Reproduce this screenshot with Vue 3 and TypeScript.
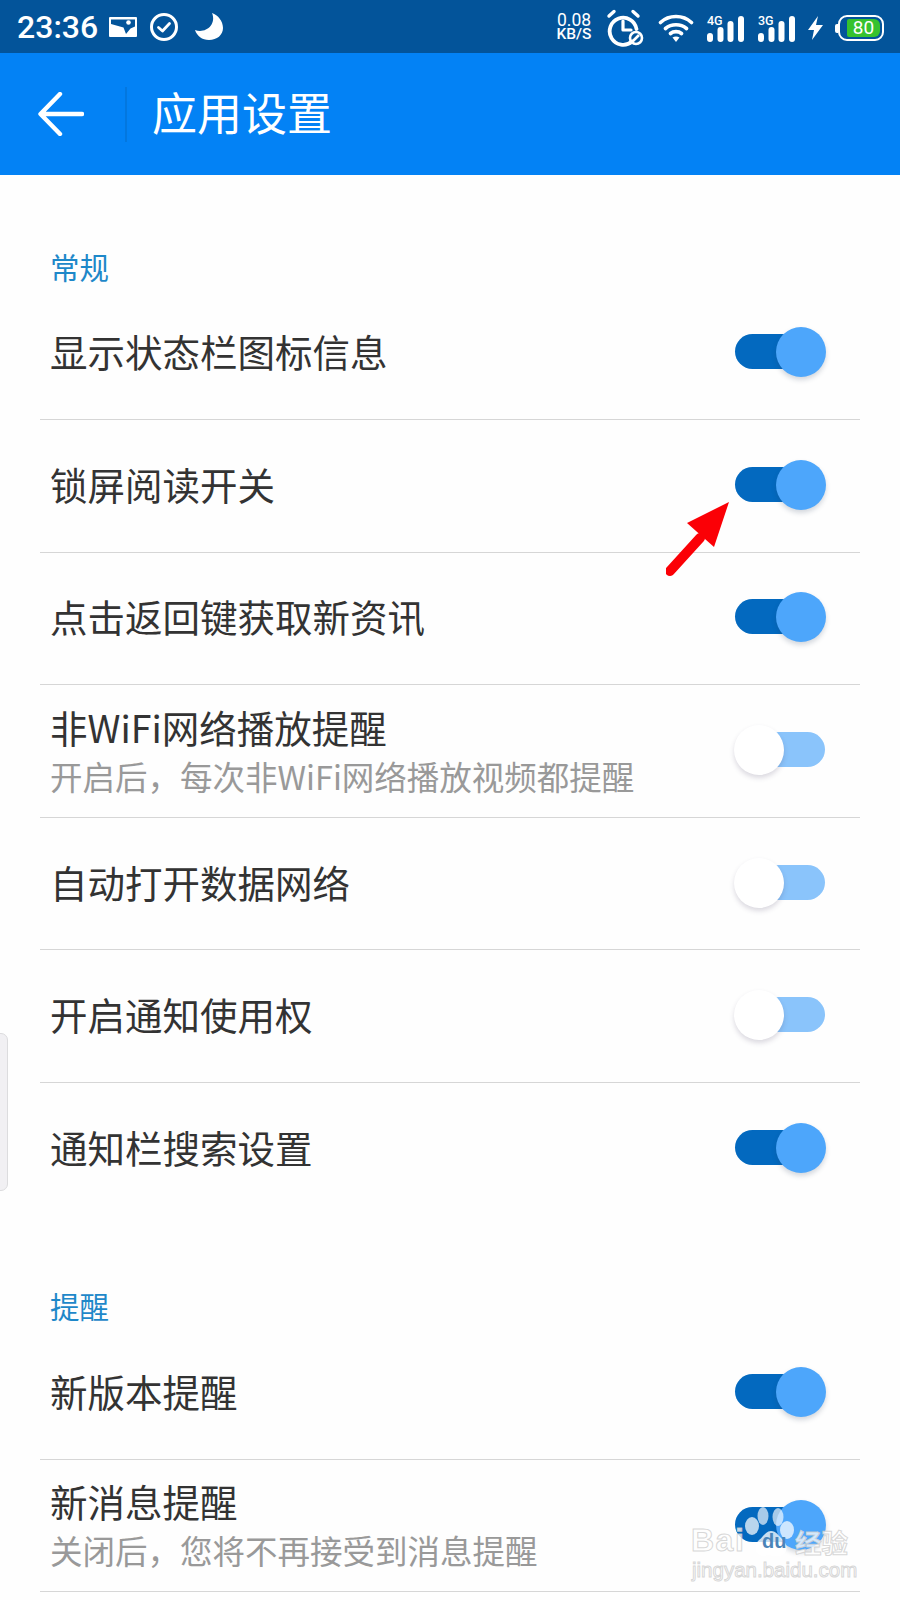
<script setup lang="ts">
interface Row { title: string; sub?: string; on: boolean }
interface Section { label: string; rows: Row[] }
const sections: Section[] = [
  {
    label: '常规',
    rows: [
      { title: '显示状态栏图标信息', on: true },
      { title: '锁屏阅读开关', on: true },
      { title: '点击返回键获取新资讯', on: true },
      { title: '非WiFi网络播放提醒', sub: '开启后，每次非WiFi网络播放视频都提醒', on: false },
      { title: '自动打开数据网络', on: false },
      { title: '开启通知使用权', on: false },
      { title: '通知栏搜索设置', on: true },
    ],
  },
  {
    label: '提醒',
    rows: [
      { title: '新版本提醒', on: true },
      { title: '新消息提醒', sub: '关闭后，您将不再接受到消息提醒', on: true },
    ],
  },
]
</script>

<template>
  <div class="page">
    <div class="status">
      <span class="time">23:36</span>
      <svg class="ic-pic" width="28" height="20" viewBox="0 0 28 20">
        <rect width="28" height="20" rx="1" fill="#fff" />
        <path d="M2 2.500H26V9.500L21.500 11.500 17 17 14.500 10.500 2 7z" fill="#03549a" />
        <circle cx="19.500" cy="5.500" r="2.300" fill="#fff" />
      </svg>
      <svg class="ic-check" width="30" height="30" viewBox="0 0 30 30">
        <circle cx="15" cy="15" r="12.500" fill="none" stroke="#fff" stroke-width="3" />
        <path d="M9.500 15.500l4 3.500 7-7.500" fill="none" stroke="#fff" stroke-width="2.800" stroke-linecap="round" stroke-linejoin="round" />
      </svg>
      <svg class="ic-moon" width="30" height="30" viewBox="0 0 30 30">
        <path d="M18 1c6 2 11 8 11 15 0 7-6 12-14 12C8 28 3 24 1 18c10 4 22-5 17-17z" fill="#fff" />
      </svg>
      <span class="spacer"></span>
      <div class="speed"><span>0.08</span><span>KB/S</span></div>
      <svg class="ic-alarm" width="38" height="38" viewBox="0 0 38 38">
        <path d="M26 32.500A13.500 13.500 0 1 1 30.500 20" fill="none" stroke="#fff" stroke-width="3.800" stroke-linecap="round" />
        <path d="M17 12v9h8" fill="none" stroke="#fff" stroke-width="3.200" stroke-linecap="round" stroke-linejoin="round" />
        <path d="M3 7l5-4.500M27 2.500l5 4.500" stroke="#fff" stroke-width="3.400" stroke-linecap="round" />
        <circle cx="30" cy="29" r="6" fill="none" stroke="#fff" stroke-width="2.600" />
        <path d="M27 32l6-6" stroke="#fff" stroke-width="2.600" />
      </svg>
      <svg class="ic-wifi" width="36" height="30" viewBox="0 0 36 30">
        <path d="M2.500 9.500C11 1.500 25 1.500 33.500 9.500M7.500 15.500c6-5 15-5 21 0M12.500 20.500c3-2.500 8-2.500 11 0" fill="none" stroke="#fff" stroke-width="3.600" stroke-linecap="round" />
        <path d="M14.500 24.500c2-1.500 5-1.500 7 0L18 29z" fill="#fff" />
      </svg>
      <div class="net">
        <span class="gen">4G</span>
        <svg width="37" height="26" viewBox="0 0 37 26">
          <rect x="0" y="17" width="6" height="9" rx="3" fill="#fff" />
          <rect x="10.500" y="11" width="6" height="15" rx="3" fill="#fff" />
          <rect x="20.500" y="5" width="6" height="21" rx="3" fill="#fff" />
          <rect x="31" y="0" width="6" height="26" rx="3" fill="#fff" />
        </svg>
      </div>
      <div class="net net2">
        <span class="gen">3G</span>
        <svg width="37" height="26" viewBox="0 0 37 26">
          <rect x="0" y="17" width="6" height="9" rx="3" fill="#fff" />
          <rect x="10.500" y="11" width="6" height="15" rx="3" fill="#fff" />
          <rect x="20.500" y="5" width="6" height="21" rx="3" fill="#fff" />
          <rect x="31" y="0" width="6" height="26" rx="3" fill="#fff" />
        </svg>
      </div>
      <svg class="ic-bolt" width="15" height="24" viewBox="0 0 15 24">
        <path d="M10 0L0 14h6L4 24l11-15H8z" fill="#fff" />
      </svg>
      <div class="battery">
        <span class="nub"></span>
        <div class="cell"><span class="fill">80</span></div>
      </div>
    </div>

    <header class="bar">
      <svg class="back" width="46" height="44" viewBox="0 0 46 44">
        <path d="M44 22H3M22 2L2.500 22 22 42" fill="none" stroke="#fff" stroke-width="4.400" stroke-linecap="round" stroke-linejoin="round" />
      </svg>
      <span class="vline"></span>
      <span class="bar-title">应用设置</span>
    </header>

    <section v-for="s in sections" :key="s.label" class="section">
      <div class="label">{{ s.label }}</div>
      <div v-for="r in s.rows" :key="r.title" class="row">
        <div class="texts">
          <div class="title">{{ r.title }}</div>
          <div v-if="r.sub" class="sub">{{ r.sub }}</div>
        </div>
        <div class="switch" :class="{ on: r.on }">
          <span class="track"></span>
          <span class="knob"></span>
        </div>
      </div>
    </section>

    <div class="handle"></div>

    <svg class="arrow" width="70" height="80" viewBox="0 0 70 80">
      <path d="M4 71L34 38" stroke="#fb0006" stroke-width="10" stroke-linecap="round" />
      <path d="M63 2L21 23l27 24z" fill="#fb0006" />
    </svg>

    <div class="mark">
      <svg class="paw" width="64" height="60" viewBox="0 0 64 60">
        <ellipse cx="26" cy="13" rx="5.500" ry="9" fill="#fff" fill-opacity=".65" />
        <ellipse cx="41" cy="14" rx="5.500" ry="9" fill="#fff" fill-opacity=".65" />
        <ellipse cx="15" cy="23" rx="7" ry="9" fill="#fff" fill-opacity=".72" />
        <ellipse cx="50" cy="27" rx="7" ry="9" fill="#fff" fill-opacity=".72" />
        <path d="M34 28c5 0 8 5 12 9 6 6 4 16-5 16-5 0-9-1-14 0-9 0-11-10-5-16 4-3 7-9 12-9z" fill="#fff" fill-opacity=".78" />
      </svg>
      <span class="wm wm-bai">Bai</span>
      <span class="wm-du">du</span>
      <span class="wm wm-jy">经验</span>
      <span class="wm wm-url">jingyan.baidu.com</span>
    </div>
  </div>
</template>

<style scoped>
.page {
  position: relative;
  width: 900px;
  height: 1600px;
  overflow: hidden;
  background: #fefefe;
  font-family: "Noto Sans CJK SC", "Noto Sans", sans-serif;
  color: #333;
}
.status {
  height: 53px;
  background: #03549a;
  display: flex;
  align-items: center;
  padding-left: 17px;
  padding-right: 16px;
  box-sizing: border-box;
  color: #fff;
}
.time {
  font-family: Roboto, sans-serif;
  font-weight: 500;
  font-size: 32px;
  width: 92px;
  line-height: 50px;
}
.ic-check { margin-left: 12px; }
.ic-moon { margin-left: 15px; }
.spacer { flex: 1; }
.speed {
  width: 40px;
  display: flex;
  flex-direction: column;
  align-items: center;
  font-family: Roboto, sans-serif;
  font-weight: 400;
  font-size: 17.500px;
  line-height: 14px;
}
.speed span:last-child { font-size: 15.500px; line-height: 14px; font-weight: 500; }
.ic-alarm { margin-left: 12px; margin-top: 2px; }
.ic-wifi { margin-left: 14px; margin-top: 3px; }
.net {
  position: relative;
  width: 37px;
  height: 26px;
  margin-left: 13px;
  margin-top: 5px;
}
.net2 { margin-left: 14px; }
.net svg { display: block; }
.gen {
  position: absolute;
  left: 0;
  top: -1px;
  font-family: Roboto, sans-serif;
  font-weight: 500;
  font-size: 12.500px;
  line-height: 12px;
}
.ic-bolt { margin-left: 13px; margin-top: 3px; }
.battery {
  display: flex;
  align-items: center;
  margin-left: 12px;
  margin-top: 3px;
}
.nub {
  width: 3px;
  height: 9px;
  background: #fff;
  border-radius: 2px 0 0 2px;
}
.cell {
  width: 46px;
  height: 26px;
  box-sizing: border-box;
  border: 2px solid #fff;
  border-radius: 9px;
  padding: 2px;
  display: flex;
  justify-content: flex-end;
}
.fill {
  width: 33px;
  background: #36c22e;
  border-radius: 2px 6px 6px 2px;
  font-family: Roboto, sans-serif;
  font-size: 19px;
  line-height: 18px;
  text-align: center;
  color: #fff;
}
.bar {
  height: 122px;
  background: #0382f5;
  display: flex;
  align-items: center;
  color: #fff;
}
.back { margin-left: 38px; }
.vline {
  width: 2px;
  height: 55px;
  background: #0377df;
  margin-left: 41px;
}
.bar-title {
  margin-left: 25px;
  font-size: 45px;
  line-height: 56px;
  margin-bottom: 4px;
}
.section { padding: 72.500px 40px 0; }
.section + .section { padding-top: 71.500px; }
.label {
  height: 40px;
  line-height: 36px;
  padding-left: 10px;
  font-size: 29.500px;
  color: #1e88c9;
}
.row {
  height: 132.600px;
  box-sizing: border-box;
  border-bottom: 1px solid #d6d6d6;
  display: flex;
  align-items: center;
  justify-content: space-between;
  padding: 0 34px 2px 10px;
}
.section .row:nth-child(8) { border-bottom: 0; }
.texts { margin-bottom: 2px; }
.title {
  font-size: 37.500px;
  line-height: 50px;
  color: #333;
}
.sub {
  font-size: 32.500px;
  line-height: 46px;
  color: #999;
  margin-top: 1px;
  margin-bottom: -2px;
}
.switch {
  position: relative;
  width: 92px;
  height: 50px;
  flex: none;
}
.track {
  position: absolute;
  left: 1px;
  right: 1px;
  top: 7px;
  height: 35px;
  border-radius: 18px;
  background: #8ac4fb;
}
.knob {
  position: absolute;
  left: 0;
  top: 0;
  width: 50px;
  height: 50px;
  border-radius: 50%;
  background: #fff;
  box-shadow: 0 3px 5px rgba(60, 50, 90, 0.18);
}
.switch.on .track { background: #0369bf; right: 6px; left: 1px; }
.switch.on .knob {
  left: auto;
  right: 0;
  background: #4da6fb;
  box-shadow: 0 3px 5px rgba(40, 60, 90, 0.2);
}
.handle {
  position: absolute;
  left: -2px;
  top: 1033px;
  width: 10px;
  height: 158px;
  box-sizing: border-box;
  background: #f1f0f3;
  border: 1px solid #dcdcde;
  border-radius: 0 7px 7px 0;
}
.arrow {
  position: absolute;
  left: 666px;
  top: 500px;
}
.mark {
  position: absolute;
  left: 688px;
  top: 1500px;
  width: 170px;
  height: 90px;
}
.paw { position: absolute; left: 49px; top: 3px; }
.mark span { position: absolute; white-space: nowrap; }
.wm {
  color: rgba(255, 255, 255, 0.75);
  -webkit-text-stroke: 1px rgba(205, 205, 205, 0.8);
}
.wm-bai {
  left: 3px;
  top: 20px;
  font-family: "Liberation Sans", sans-serif;
  font-weight: 700;
  font-size: 32px;
  letter-spacing: 1.500px;
  line-height: 40px;
}
.wm-du {
  left: 74px;
  top: 28px;
  font-family: "Liberation Sans", sans-serif;
  font-weight: 700;
  font-size: 20px;
  line-height: 26px;
  color: #4a84b8;
}
.wm-jy {
  left: 107px;
  top: 24px;
  font-size: 26.500px;
  line-height: 36px;
  font-weight: 700;
}
.wm-url {
  left: 4px;
  top: 57px;
  font-family: "Liberation Sans", sans-serif;
  font-size: 20.500px;
  line-height: 26px;
}
</style>
